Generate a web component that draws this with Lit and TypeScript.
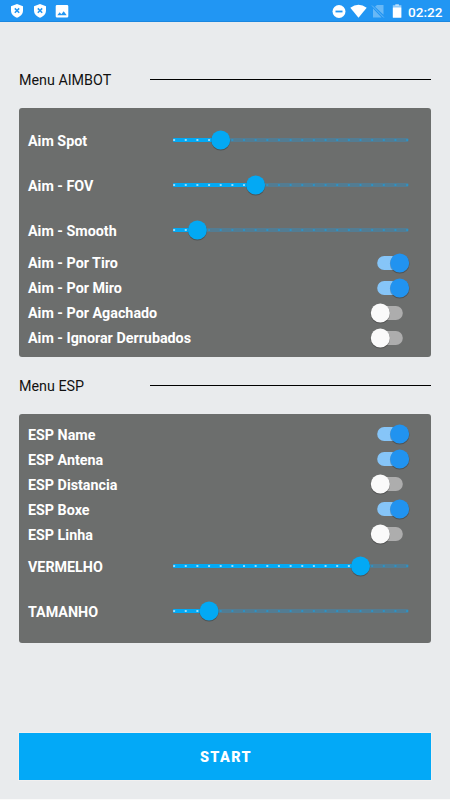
import { LitElement, html, css, svg } from "lit";
import { customElement, property } from "lit/decorators.js";
import { classMap } from "lit/directives/class-map.js";

const STEPS = 20;
const STEP = 11.65;

@customElement("seek-bar")
class SeekBar extends LitElement {
  @property({ type: Number }) value = 0;

  static styles = css`
    :host { display: block; width: 240px; height: 24px; }
    svg { display: block; overflow: visible; }
    .rail { fill: #537c92; }
    .fill { fill: #03a9f4; }
    .tick { fill: #2b93c6; }
    .tick-on { fill: #9adcf9; }
    .shadow { fill: #000; opacity: 0.25; }
  `;

  render() {
    const cx = 4.1 + this.value * STEP;
    const ticks = Array.from({ length: STEPS + 1 }, (_, i) => i);
    return html`<svg width="240" height="24" viewBox="0 0 240 24">
      <rect class="rail" x="3" y="10" width="235.5" height="4" rx="1"></rect>
      <rect class="fill" x="3" y="10" width=${cx - 3} height="4" rx="1"></rect>
      ${ticks.map((i) => svg`<rect class=${i <= this.value ? "tick-on" : "tick"}
        x=${4.1 + i * STEP - 1} y="11" width="2" height="2" rx="0.5"></rect>`)}
      <circle class="shadow" cx=${cx} cy="12.8" r="9.7"></circle>
      <circle class="fill" cx=${cx} cy="12" r="9.5"></circle>
    </svg>`;
  }
}

@customElement("toggle-switch")
class ToggleSwitch extends LitElement {
  @property({ type: Boolean }) on = false;

  static styles = css`
    :host { display: block; width: 40px; height: 24px; }
    svg { display: block; overflow: visible; }
    .rail { fill: #adadad; }
    .knob { fill: #fafafa; }
    .on .rail { fill: #86c5f8; }
    .on .knob { fill: #2193f0; }
    .shadow { fill: #000; opacity: 0.25; }
  `;

  render() {
    const cx = this.on ? 29.7 : 10.3;
    return html`<svg class=${classMap({ on: this.on })} width="40" height="24" viewBox="0 0 40 24">
      <rect class="rail" x="7.2" y="5" width="25.6" height="14" rx="7"></rect>
      <circle class="shadow" cx=${cx} cy="12.8" r="9.8"></circle>
      <circle class="knob" cx=${cx} cy="12" r="9.5"></circle>
    </svg>`;
  }
}

type Row = { label: string; value?: number; on?: boolean };

const AIMBOT: Row[] = [
  { label: "Aim Spot", value: 4 },
  { label: "Aim - FOV", value: 7 },
  { label: "Aim - Smooth", value: 2 },
  { label: "Aim - Por Tiro", on: true },
  { label: "Aim - Por Miro", on: true },
  { label: "Aim - Por Agachado", on: false },
  { label: "Aim - Ignorar Derrubados", on: false },
];

const ESP: Row[] = [
  { label: "ESP Name", on: true },
  { label: "ESP Antena", on: true },
  { label: "ESP Distancia", on: false },
  { label: "ESP Boxe", on: true },
  { label: "ESP Linha", on: false },
  { label: "VERMELHO", value: 16 },
  { label: "TAMANHO", value: 3 },
];

@customElement("app-root")
class AppRoot extends LitElement {
  static styles = css`
    :host {
      display: flex;
      flex-direction: column;
      box-sizing: border-box;
      width: 450px;
      height: 800px;
      background: #e9ebed;
      border-bottom: 1px solid #fafafa;
      font-family: Roboto, "Liberation Sans", sans-serif;
      overflow: hidden;
    }
    .status {
      display: flex;
      align-items: center;
      box-sizing: border-box;
      height: 22px;
      padding: 0 6px 0 10px;
      background: #2196f3;
      border-bottom: 1px solid #1a87e0;
      color: #fff;
    }
    .status svg { display: block; flex: none; fill: #fff; }
    .left { display: flex; gap: 8.5px; flex: 1; }
    .right { display: flex; align-items: center; }
    .wifi { margin-left: 4.5px; }
    .clock { font-size: 13.6px; line-height: 20px; font-weight: 500; margin-left: 6px; width: 36px; white-space: nowrap; padding-top: 2px; }
    .heading {
      display: flex;
      align-items: center;
      height: 20px;
      margin: 0 19px;
      font-size: 14.3px;
      color: #111;
    }
    .heading.first { margin-top: 48px; }
    .heading.second { margin-top: 19px; }
    .title { width: 131px; }
    .rule { flex: 1; height: 1px; background: #000; margin-bottom: 1px; }
    .panel {
      box-sizing: border-box;
      margin: 18px 19px 0;
      padding: 0 21px 0 9px;
      border-radius: 3px;
      background: #6c6e6d;
    }
    .aimbot { height: 249px; padding-top: 12px; }
    .esp { height: 229px; padding-top: 7px; }
    .row {
      display: flex;
      align-items: center;
      justify-content: space-between;
      height: 25px;
      color: #fff;
      font-size: 14.3px;
      font-weight: 700;
    }
    .row.slider { height: 40px; }
    .row.slider + .row.slider { margin-top: 5px; }
    .label { padding-top: 2px; }
    .aimbot .row:not(.slider) .label { padding-top: 0; }
    .start {
      display: flex;
      align-items: center;
      justify-content: center;
      box-sizing: border-box;
      height: 47px;
      margin: auto 19px 19px;
      padding: 2px 0 0 2px;
      border: 0;
      background: #03a9f7;
      color: #fff;
      font: 900 14.4px Roboto, "Liberation Sans", sans-serif;
      letter-spacing: 1.4px;
      box-shadow: 0 0 0 1px #f1f0f0;
    }
  `;

  private row(r: Row) {
    const slider = r.value !== undefined;
    return html`<div class=${classMap({ row: true, slider })}>
      <span class="label">${r.label}</span>
      ${slider
        ? html`<seek-bar .value=${r.value!}></seek-bar>`
        : html`<toggle-switch .on=${!!r.on}></toggle-switch>`}
    </div>`;
  }

  private shield() {
    return html`<svg width="14" height="15" viewBox="0 0 14 15">
      <path d="M7 1 1 3.300v4.200c0 3.300 2.500 6.200 6 7.200 3.500-1 6-3.900 6-7.200V3.300z"></path>
      <path d="M4.800 5.400 9.200 9.800M9.200 5.400 4.800 9.800" stroke="#2196f3" stroke-width="1.500"></path>
    </svg>`;
  }

  render() {
    return html`
      <div class="status">
        <div class="left">
          ${this.shield()}${this.shield()}
          <svg width="14" height="15" viewBox="0 0 14 15">
            <path fill-rule="evenodd" d="M2 2h10a1.300 1.300 0 0 1 1.300 1.300v10A1.300 1.300 0 0 1 12 14.600H2A1.300 1.300 0 0 1 .7 13.300v-10A1.300 1.300 0 0 1 2 2zM2.300 12.200h9.400L8.700 8.200l-2.400 3-1.600-2z"></path>
          </svg>
        </div>
        <div class="right">
          <svg width="14" height="15" viewBox="0 0 14 15">
            <circle cx="7" cy="8.500" r="6.500"></circle>
            <rect x="3.500" y="7.600" width="7" height="1.800" fill="#2196f3"></rect>
          </svg>
          <svg class="wifi" width="17" height="15" viewBox="0 0 17 15">
            <path d="M.3 4.700Q8.500-1.300 16.700 4.700L8.500 14.700z"></path>
          </svg>
          <svg width="25" height="15" viewBox="0 0 25 15">
            <g opacity="0.32">
              <path d="M10 2h6.500v9.700L8 3.800zM6 5.500 14.500 14.500H6z"></path>
              <path d="M5 2.500 16.800 14.500" stroke="#fff" stroke-width="1"></path>
            </g>
          </svg>
          <svg width="10" height="15" viewBox="0 0 10 15">
            <rect x="3.300" y="1" width="3.600" height="2" opacity="0.5"></rect>
            <path opacity="0.5" d="M.8 2.200h8.600V5H.8z"></path>
            <rect x=".8" y="4.500" width="8.600" height="10.300" rx=".5"></rect>
          </svg>
          <span class="clock">02:22</span>
        </div>
      </div>
      <div class="heading first"><span class="title">Menu AIMBOT</span><span class="rule"></span></div>
      <div class="panel aimbot">${AIMBOT.map((r) => this.row(r))}</div>
      <div class="heading second"><span class="title">Menu ESP</span><span class="rule"></span></div>
      <div class="panel esp">${ESP.map((r) => this.row(r))}</div>
      <button class="start">START</button>
    `;
  }
}
